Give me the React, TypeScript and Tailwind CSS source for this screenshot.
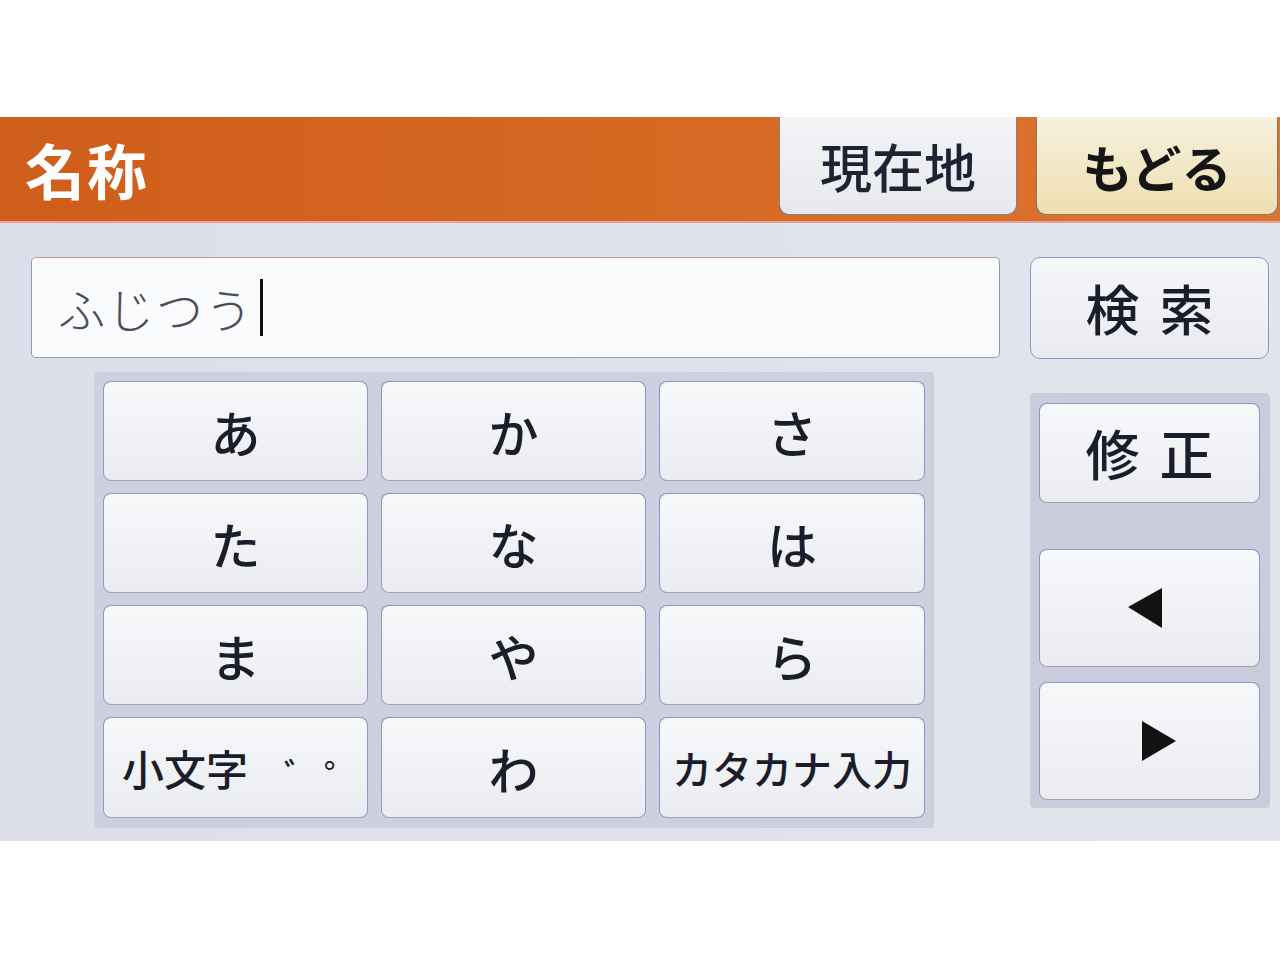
import React from "react";

const F = "font-['Noto_Sans_CJK_JP','Noto_Sans',sans-serif]";

function Key({ children, className = "" }: { children: React.ReactNode; className?: string }) {
  return (
    <div
      className={`flex items-center justify-center rounded-[8px] border border-[#8f97c8] border-b-[#b39aaa] bg-gradient-to-b from-[#f7f8fa] to-[#eaecf1] text-[#1b1d2a] ${className}`}
    >
      {children}
    </div>
  );
}

export default function App() {
  const rows = [
    ["あ", "か", "さ"],
    ["た", "な", "は"],
    ["ま", "や", "ら"],
  ];
  return (
    <div className={`w-[1280px] h-[960px] bg-white flex flex-col ${F}`}>
      <div className="h-[117px] shrink-0" />
      <div className="h-[724px] shrink-0 w-[1280px] flex flex-col">
        {/* header */}
        <div className="h-[106px] shrink-0 flex items-start bg-gradient-to-r from-[#cf5d1b] via-[#d66822] to-[#de7430] border-b-2 border-[#e6a39c]">
          <div className="h-[104px] flex items-center pl-[25px] w-[779px] shrink-0 text-white text-[60px] font-bold leading-none tracking-[2px]">
            名称
          </div>
          <div className="w-[238px] shrink-0 h-[98px] rounded-b-[10px] border border-t-0 border-[#7d7f8c] bg-gradient-to-b from-[#f3f4f6] to-[#e6e8ed] flex items-center justify-center text-[52px] font-medium leading-none text-[#1f2232]">
            現在地
          </div>
          <div className="ml-[19px] w-[242px] shrink-0 h-[98px] rounded-b-[10px] border border-t-0 border-[#7d7a70] bg-gradient-to-b from-[#f7f1dc] to-[#eedfb1] flex items-center justify-center text-[50px] font-bold leading-none text-[#151515]">
            もどる
          </div>
        </div>
        {/* body */}
        <div className="flex-1 bg-gradient-to-r from-[#dcdfe9] to-[#e3e5ed] pl-[31px] pt-[34px] flex flex-col">
          <div className="flex items-start">
            <div className="w-[969px] h-[101px] rounded-[5px] bg-[#fafbfc] border border-[#8e95bf] border-t-[#c09a88] flex items-center pl-[26px]">
              <span className="text-[47px] font-light text-[#4a4c58] leading-none tracking-[2px]">ふじつう</span>
              <span className="ml-[6px] w-[3px] h-[57px] bg-[#111]" />
            </div>
            <div className="ml-[30px] w-[239px] h-[102px] rounded-[10px] border border-[#8d95c4] bg-gradient-to-b from-[#f5f6f8] to-[#e9ebf0] flex items-center justify-center gap-[20px] text-[54px] font-medium leading-none text-[#1b1d2a]">
              <span>検</span>
              <span>索</span>
            </div>
          </div>
          <div className="flex items-start mt-[13px]">
            {/* keypad */}
            <div className="ml-[63px] w-[840px] h-[456px] rounded-[4px] bg-[#cdd0de] p-[9px] grid grid-cols-[265px_265px_266px] grid-rows-[100px_100px_100px_101px] gap-x-[13px] gap-y-[12px]">
              {rows.flat().map((k) => (
                <Key key={k} className="text-[50px] font-medium leading-none">
                  {k}
                </Key>
              ))}
              <Key className="!justify-start pl-[18px] leading-none whitespace-nowrap">
                <span className="shrink-0 text-[42px] font-medium">小文字</span>
                <span className="shrink-0 ml-[38px] text-[34px] font-medium translate-x-[-2px] translate-y-[6px]">゛</span>
                <span className="shrink-0 ml-[4px] text-[40px] font-normal translate-y-[9px]">゜</span>
              </Key>
              <Key className="text-[50px] font-medium leading-none">わ</Key>
              <Key className="text-[40px] font-medium leading-none whitespace-nowrap">カタカナ入力</Key>
            </div>
            {/* right column */}
            <div className="ml-[96px] mt-[21px] w-[240px] h-[415px] rounded-[4px] bg-[#c9ccda] pl-[9px] pr-[10px] pt-[10px] flex flex-col">
              <Key className="h-[100px] gap-[20px] text-[54px] font-medium leading-none">
                <span>修</span>
                <span>正</span>
              </Key>
              <Key className="mt-[46px] h-[118px]">
                <svg width="36" height="40" viewBox="0 0 36 40" className="mr-[8px]">
                  <polygon points="34,0 34,40 0,19" fill="#111" />
                </svg>
              </Key>
              <Key className="mt-[15px] h-[118px]">
                <svg width="36" height="40" viewBox="0 0 36 40" className="ml-[16px]">
                  <polygon points="2,0 2,40 36,20" fill="#111" />
                </svg>
              </Key>
            </div>
          </div>
        </div>
      </div>
    </div>
  );
}
